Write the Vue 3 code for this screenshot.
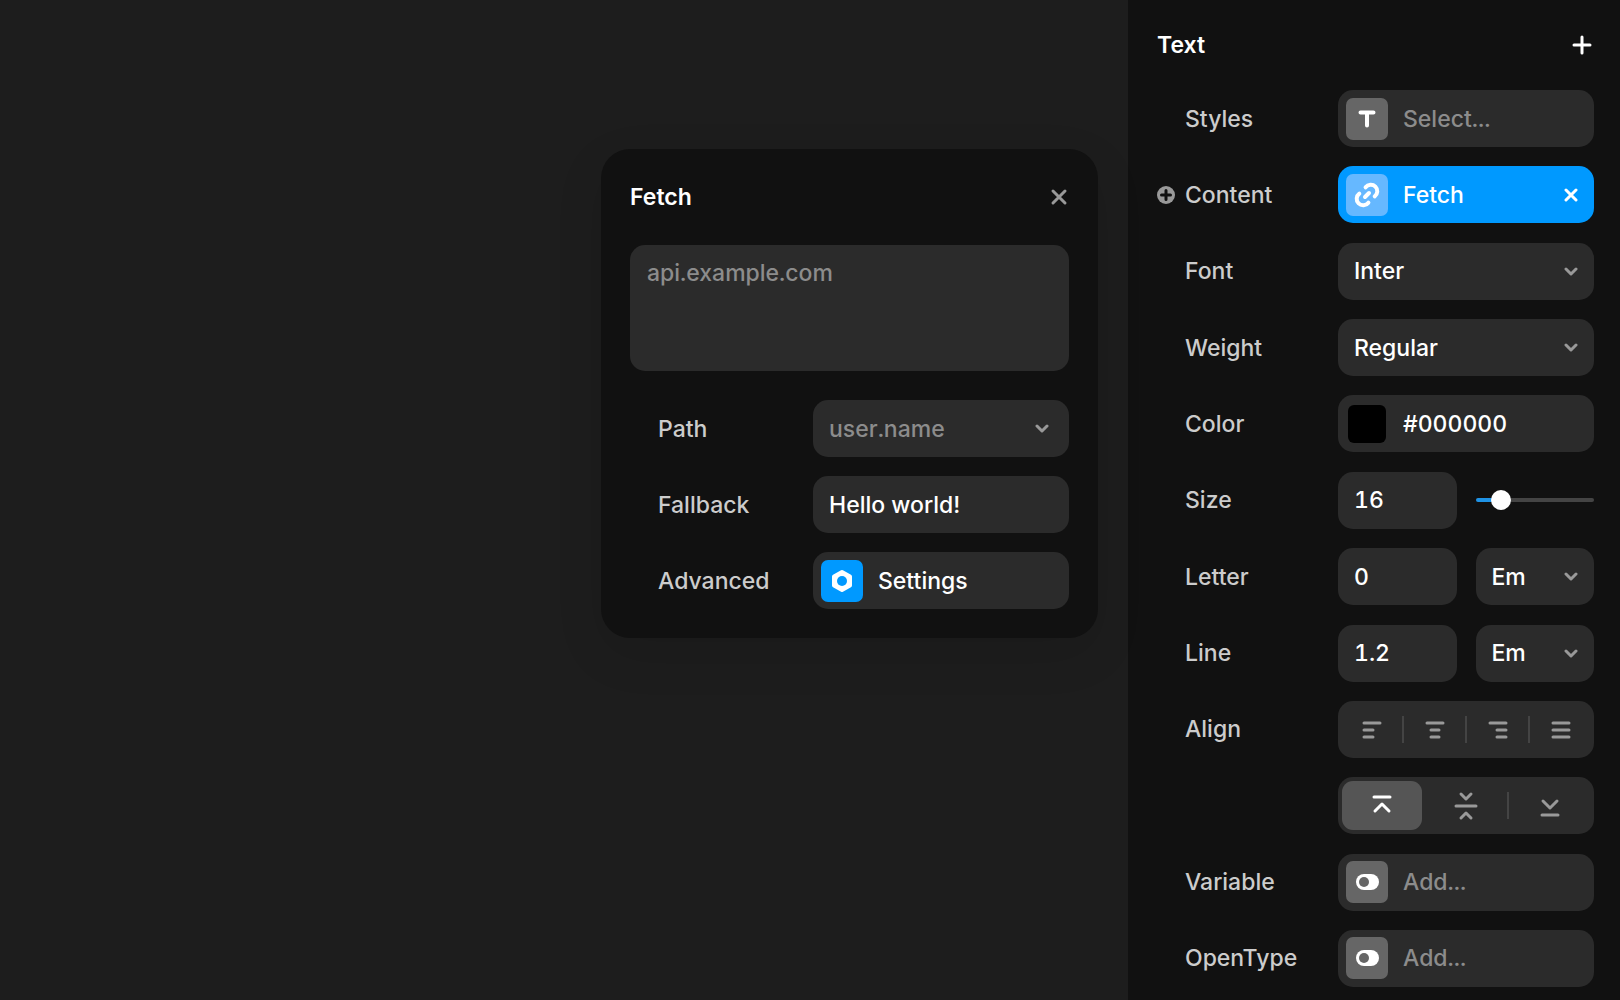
<template>
  <div class="editor">
    <main class="canvas">
      <section class="popover" aria-labelledby="popover-title">
        <header class="popover-header">
          <h2 id="popover-title">Fetch</h2>
          <button type="button" class="icon-button muted" aria-label="Close">
            <svg width="20" height="20" viewBox="0 0 20 20"><path d="M4 4l12 12M16 4L4 16" /></svg>
          </button>
        </header>

        <textarea v-model="url" class="field url" placeholder="api.example.com" aria-label="URL"></textarea>

        <div class="rows">
          <div class="row">
            <label for="path">Path</label>
            <div class="select">
              <select id="path" v-model="path" class="field" :class="{ empty: !path }">
                <option value="">user.name</option>
              </select>
              <svg class="chevron" width="14" height="10" viewBox="0 0 14 10"><path d="M2 2l5 5 5-5" /></svg>
            </div>
          </div>
          <div class="row">
            <label for="fallback">Fallback</label>
            <input id="fallback" v-model="fallback" type="text" class="field" />
          </div>
          <div class="row">
            <label for="advanced">Advanced</label>
            <button id="advanced" type="button" class="field tile-field">
              <span class="tile blue">
                <svg width="24" height="26" viewBox="0 0 24 26">
                  <path class="nut" d="M12 4l8 4.4v9.2l-8 4.4-8-4.4v-9.2z" />
                  <circle class="nut-hole" cx="12" cy="13" r="5" />
                </svg>
              </span>
              <span>Settings</span>
            </button>
          </div>
        </div>
      </section>
    </main>

    <aside class="sidebar">
      <header class="sidebar-header">
        <h2>Text</h2>
        <button type="button" class="icon-button" aria-label="Add">
          <svg width="24" height="24" viewBox="0 0 24 24"><path d="M12 4v16M4 12h16" /></svg>
        </button>
      </header>

      <div class="rows properties">
        <div class="row">
          <label for="styles">Styles</label>
          <button id="styles" type="button" class="field tile-field empty">
            <span class="tile">
              <svg width="22" height="22" viewBox="0 0 22 22"><path class="thick" d="M4.5 4.5h13M11 4.5v13" /></svg>
            </span>
            <span>Select...</span>
          </button>
        </div>

        <div class="row">
          <label for="content">
            <svg class="badge" width="18" height="18" viewBox="0 0 18 18">
              <circle cx="9" cy="9" r="9" />
              <path d="M9 4.5v9M4.5 9h9" />
            </svg>
            Content
          </label>
          <div class="field tile-field linked">
            <button id="content" type="button" class="link-button">
              <span class="tile light">
                <svg width="28" height="28" viewBox="0 0 28 28">
                  <path class="link" d="M12.6 6.3a6.5 6.5 0 1 1 9.1 9.1M15.4 21.7a6.5 6.5 0 1 1-9.1-9.1M12 16l4-4" />
                </svg>
              </span>
              <span>Fetch</span>
            </button>
            <button type="button" class="icon-button remove" aria-label="Remove">
              <svg width="14" height="14" viewBox="0 0 14 14"><path d="M2 2l10 10M12 2L2 12" /></svg>
            </button>
          </div>
        </div>

        <div v-for="item in fonts" :key="item.id" class="row">
          <label :for="item.id">{{ item.label }}</label>
          <div class="select">
            <select :id="item.id" class="field">
              <option>{{ item.value }}</option>
            </select>
            <svg class="chevron" width="14" height="10" viewBox="0 0 14 10"><path d="M2 2l5 5 5-5" /></svg>
          </div>
        </div>

        <div class="row">
          <label for="color">Color</label>
          <div class="field tile-field color-field">
            <input v-model="color" type="color" class="swatch" aria-label="Pick color" />
            <input id="color" v-model="color" type="text" class="hex" />
          </div>
        </div>

        <div class="row">
          <label for="size">Size</label>
          <div class="pair">
            <input id="size" v-model="size" type="text" class="field" />
            <input v-model="size" type="range" min="0" max="100" class="slider" aria-label="Size slider" :style="{ '--fill': size + '%' }" />
          </div>
        </div>

        <div v-for="item in spacings" :key="item.id" class="row">
          <label :for="item.id">{{ item.label }}</label>
          <div class="pair">
            <input :id="item.id" v-model="item.value" type="text" class="field" />
            <div class="select">
              <select class="field" :aria-label="item.label + ' unit'">
                <option>Em</option>
              </select>
              <svg class="chevron" width="14" height="10" viewBox="0 0 14 10"><path d="M2 2l5 5 5-5" /></svg>
            </div>
          </div>
        </div>

        <div class="row">
          <span class="label">Align</span>
          <div class="field segments" role="group" aria-label="Align">
            <button v-for="item in horizontal" :key="item.name" type="button" :aria-label="item.name">
              <svg width="24" height="28" viewBox="0 0 24 28"><path :d="item.icon" /></svg>
            </button>
          </div>
        </div>

        <div class="row">
          <span class="label"></span>
          <div class="field segments" role="group" aria-label="Vertical align">
            <button
              v-for="item in vertical"
              :key="item.name"
              type="button"
              :class="{ active: valign === item.name }"
              :aria-label="item.name"
              :aria-pressed="valign === item.name"
              @click="valign = item.name"
            >
              <svg width="24" height="32" viewBox="0 0 24 32"><path :d="item.icon" /></svg>
            </button>
          </div>
        </div>

        <div v-for="item in extras" :key="item.id" class="row">
          <label :for="item.id">{{ item.label }}</label>
          <button :id="item.id" type="button" class="field tile-field empty">
            <span class="tile">
              <svg width="24" height="16" viewBox="0 0 24 16">
                <rect class="toggle" x="1" width="23" height="16" rx="8" />
                <circle class="toggle-hole" cx="9" cy="8" r="5" />
              </svg>
            </span>
            <span>Add...</span>
          </button>
        </div>
      </div>
    </aside>
  </div>
</template>

<script setup>
import { ref } from 'vue';

const url = ref('');
const path = ref('');
const fallback = ref('Hello world!');
const color = ref('#000000');
const size = ref(16);
const valign = ref('Top');

const fonts = [
  { id: 'font', label: 'Font', value: 'Inter' },
  { id: 'weight', label: 'Weight', value: 'Regular' },
];

const spacings = ref([
  { id: 'letter', label: 'Letter', value: '0' },
  { id: 'line', label: 'Line', value: '1.2' },
]);

const horizontal = [
  { name: 'Left', icon: 'M4 8h16M4 15h9M4 22h9' },
  { name: 'Center', icon: 'M4 8h16M8 15h8M8 22h8' },
  { name: 'Right', icon: 'M4 8h16M11 15h9M11 22h9' },
  { name: 'Justify', icon: 'M4 8h16M4 15h16M4 22h16' },
];

const vertical = [
  { name: 'Top', icon: 'M4 7h16M5 21l7-7 7 7' },
  { name: 'Middle', icon: 'M2 16h20M7 4l5 5 5-5M7 28l5-5 5 5' },
  { name: 'Bottom', icon: 'M5 11l7 7 7-7M4 25h16' },
];

const extras = [
  { id: 'variable', label: 'Variable' },
  { id: 'opentype', label: 'OpenType' },
];
</script>

<style>
body {
  background: #1d1d1d;
}
</style>

<style scoped>
* {
  box-sizing: border-box;
}

.editor {
  display: flex;
  min-height: 100vh;
  background: #1d1d1d;
  color: #fff;
  font: 500 23px/28px Inter, sans-serif;
}

.canvas {
  flex: 1;
  position: relative;
}

.popover {
  position: absolute;
  top: 149px;
  right: 30px;
  width: 497px;
  padding: 0 29px 29px;
  border-radius: 29px;
  background: #111;
  box-shadow: 0 16px 48px rgba(0, 0, 0, 0.1);
}

.sidebar {
  display: flex;
  flex-direction: column;
  width: 492px;
  padding: 0 26px 13px 29px;
  background: #111;
}

.popover-header,
.sidebar-header {
  display: flex;
  align-items: center;
  justify-content: space-between;
  height: 96px;
}

.sidebar-header {
  height: 90px;
}

h2 {
  margin: 0;
  font-size: 23px;
  font-weight: 600;
}

button,
input,
select,
textarea {
  margin: 0;
  border: 0;
  outline: 0;
  background: none;
  color: inherit;
  font: inherit;
}

svg {
  display: block;
  fill: none;
  stroke: currentColor;
  stroke-width: 3;
  stroke-linecap: round;
  stroke-linejoin: round;
}

.icon-button {
  padding: 0;
}

.muted {
  color: #999;
}

.rows {
  display: flex;
  flex-direction: column;
  gap: 19px;
  padding-left: 28px;
}

.properties {
  flex: 1;
  gap: 0;
  justify-content: space-between;
}

.row {
  display: flex;
  align-items: center;
  justify-content: space-between;
}

.row > :last-child {
  width: 256px;
}

label,
.label {
  position: relative;
  color: #ccc;
}

.badge {
  position: absolute;
  top: 5px;
  left: -28px;
  stroke: #111;
}

.badge circle {
  fill: #999;
  stroke: none;
}

.field {
  display: block;
  width: 100%;
  height: 57px;
  padding: 0 16px;
  border-radius: 15px;
  background: #2b2b2b;
  font-variant-numeric: tabular-nums;
}

.url {
  height: 126px;
  margin-bottom: 29px;
  padding: 14px 17px;
  resize: none;
}

.empty,
::placeholder {
  color: #8c8c8c;
  opacity: 1;
}

.select {
  position: relative;
}

.select select {
  appearance: none;
}

.chevron {
  position: absolute;
  top: 24px;
  right: 16px;
  color: #999;
  pointer-events: none;
}

.popover .chevron {
  right: 20px;
}

.tile-field {
  display: flex;
  align-items: center;
  gap: 15px;
  padding: 0 16px 0 8px;
}

.tile {
  display: flex;
  align-items: center;
  justify-content: center;
  width: 42px;
  height: 42px;
  border-radius: 7px;
  background: #666;
  color: #fff;
}

.blue {
  background: #09f;
}

.light {
  background: #66b8ff;
}

.thick,
.link,
.nut {
  stroke-width: 4;
}

.nut {
  fill: #fff;
}

.nut-hole {
  fill: #09f;
  stroke: none;
}

.toggle {
  fill: #fff;
  stroke: none;
}

.toggle-hole {
  fill: #666;
  stroke: none;
}

.linked {
  justify-content: space-between;
  background: #09f;
}

.link-button {
  display: flex;
  flex: 1;
  align-items: center;
  gap: 15px;
  padding: 0;
}

.color-field {
  gap: 17px;
  padding-left: 10px;
}

.swatch {
  flex: none;
  width: 38px;
  height: 38px;
  padding: 0;
  border-radius: 6px;
  overflow: hidden;
}

.swatch::-webkit-color-swatch-wrapper {
  padding: 0;
}

.swatch::-webkit-color-swatch {
  border: 0;
}

.hex {
  width: 100%;
  min-width: 0;
  padding: 0;
}

.pair {
  display: grid;
  grid-template-columns: 1fr 1fr;
  align-items: center;
  gap: 19px;
}

.slider {
  appearance: none;
  width: 100%;
  height: 4px;
  border-radius: 2px;
  background: linear-gradient(to right, #1f93e6 var(--fill), #444 var(--fill));
}

.slider::-webkit-slider-thumb {
  appearance: none;
  width: 20px;
  height: 20px;
  border-radius: 50%;
  background: #fff;
}

.segments {
  display: flex;
  gap: 4px;
  padding: 4px;
}

.segments button {
  position: relative;
  display: flex;
  flex: 1;
  align-items: center;
  justify-content: center;
  padding: 0;
  border-radius: 11px;
  color: #999;
}

.segments button + button::before {
  content: '';
  position: absolute;
  top: 11px;
  bottom: 11px;
  left: -3px;
  width: 2px;
  background: #444;
}

.segments .active {
  background: #555;
  color: #fff;
}

.segments .active + button::before {
  display: none;
}
</style>
